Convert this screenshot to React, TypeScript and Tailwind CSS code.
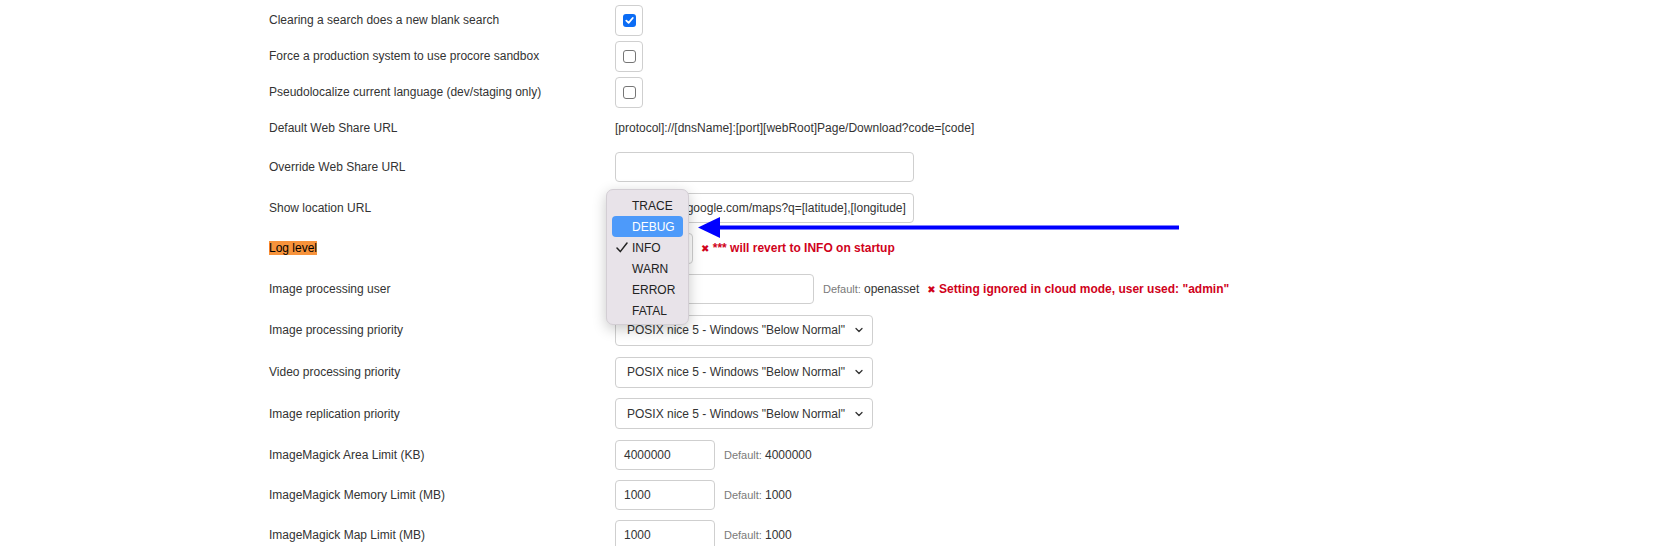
import React from 'react';
import { ChevronDown } from 'lucide-react';

const font = { fontFamily: '"Liberation Sans", Arial, sans-serif' };

const Box: React.FC<{ checked?: boolean }> = ({ checked }) => (
  <div className="w-[28px] h-[31px] border border-[#cfcfcf] rounded-[4px] flex items-center justify-center bg-white">
    {checked ? (
      <span className="w-[13px] h-[13px] rounded-[3px] bg-[#0b6cf5] flex items-center justify-center">
        <svg width="9" height="9" viewBox="0 0 10 10">
          <path d="M1.5 5.2 L4 7.6 L8.6 2.2" stroke="white" strokeWidth="2" fill="none" strokeLinecap="round" strokeLinejoin="round" />
        </svg>
      </span>
    ) : (
      <span className="w-[13px] h-[13px] rounded-[3px] border border-[#767676] bg-white" />
    )}
  </div>
);

const TextBox: React.FC<{ value?: string; w: string }> = ({ value, w }) => (
  <div className={`${w} h-[30px] border border-[#cfcfcf] rounded-[4px] bg-white px-[8px] flex items-center overflow-hidden whitespace-nowrap text-[12px] text-[#333]`}>
    {value}
  </div>
);

const Priority = () => (
  <div className="w-[258px] h-[31px] border border-[#cfcfcf] rounded-[4px] bg-white pl-[11px] pr-[7px] flex items-center justify-between text-[12px] text-[#333]">
    <span>POSIX nice 5 - Windows "Below Normal"</span>
    <ChevronDown size={12} strokeWidth={2.6} className="text-[#333]" />
  </div>
);

const Def: React.FC<{ v: string }> = ({ v }) => (
  <span className="ml-[9px] text-[12px] text-[#333]">
    <span className="text-[11px] text-[#7a7a7a]">Default: </span>
    {v}
  </span>
);

const Err: React.FC<{ children: React.ReactNode }> = ({ children }) => (
  <span className="ml-[8px] text-[12px] font-bold text-[#d0021b] whitespace-nowrap">
    <span className="text-[10px]" style={{ fontFamily: '"DejaVu Sans", sans-serif' }}>✖</span> {children}
  </span>
);

const Row: React.FC<{ h: string; label: React.ReactNode; children?: React.ReactNode }> = ({ h, label, children }) => (
  <div className={`${h} flex items-center`}>
    <div className="w-[346px] text-[12px] text-[#333] shrink-0">{label}</div>
    <div className="flex items-center">{children}</div>
  </div>
);

const levels = ['TRACE', 'DEBUG', 'INFO', 'WARN', 'ERROR', 'FATAL'];

export default function App() {
  return (
    <div className="relative w-[1675px] h-[546px] overflow-hidden bg-white" style={font}>
      <div className="pl-[269px] pt-[2px]">
        <Row h="h-[36px]" label="Clearing a search does a new blank search"><Box checked /></Row>
        <Row h="h-[36px]" label="Force a production system to use procore sandbox"><Box /></Row>
        <Row h="h-[36px]" label="Pseudolocalize current language (dev/staging only)"><Box /></Row>
        <Row h="h-[36px]" label="Default Web Share URL">
          <span className="text-[12px] text-[#333]">[protocol]://[dnsName]:[port][webRoot]Page/Download?code=[code]</span>
        </Row>
        <Row h="h-[41px]" label="Override Web Share URL"><TextBox w="w-[299px]" /></Row>
        <Row h="h-[41px]" label="Show location URL">
          <TextBox w="w-[299px]" value="http://maps.google.com/maps?q=[latitude],[longitude]" />
        </Row>
        <Row h="h-[40px]" label={<span className="bg-[#f7933b] text-black leading-[14px] inline-block">Log level</span>}>
          <div className="w-[78px] h-[31px] border border-[#cfcfcf] rounded-[4px] bg-white" />
          <Err>*** will revert to INFO on startup</Err>
        </Row>
        <Row h="h-[41px]" label="Image processing user">
          <TextBox w="w-[199px]" />
          <Def v="openasset" />
          <Err>Setting ignored in cloud mode, user used: "admin"</Err>
        </Row>
        <Row h="h-[42px]" label="Image processing priority"><Priority /></Row>
        <Row h="h-[42px]" label="Video processing priority"><Priority /></Row>
        <Row h="h-[41px]" label="Image replication priority"><Priority /></Row>
        <Row h="h-[41px]" label="ImageMagick Area Limit (KB)">
          <TextBox w="w-[100px]" value="4000000" />
          <Def v="4000000" />
        </Row>
        <Row h="h-[40px]" label="ImageMagick Memory Limit (MB)">
          <TextBox w="w-[100px]" value="1000" />
          <Def v="1000" />
        </Row>
        <Row h="h-[40px]" label="ImageMagick Map Limit (MB)">
          <TextBox w="w-[100px]" value="1000" />
          <Def v="1000" />
        </Row>
      </div>

      {/* native popup menu */}
      <div className="absolute left-[606px] top-[189px] w-[83px] h-[136px] rounded-[7px] bg-[#e8e3e9] border border-[#d3ced4] shadow-[0_4px_14px_rgba(0,0,0,0.22)] pt-[5px] px-[5px]">
        {levels.map((l) => (
          <div
            key={l}
            className={`h-[21px] rounded-[4px] flex items-center text-[12px] ${l === 'DEBUG' ? 'bg-[#4d9afa] text-white' : 'text-[#222]'}`}
          >
            <span className="w-[20px] flex justify-center">
              {l === 'INFO' && (
                <svg width="12" height="11" viewBox="0 0 12 11">
                  <path d="M1 6 L4.3 9.6 L11 1" stroke="#222" strokeWidth="1.5" fill="none" strokeLinecap="round" strokeLinejoin="round" />
                </svg>
              )}
            </span>
            {l}
          </div>
        ))}
      </div>

      {/* annotation arrow */}
      <svg className="absolute left-[698px] top-[216px]" width="484" height="24" viewBox="0 0 484 24">
        <line x1="18" y1="11.5" x2="481" y2="11.5" stroke="#0000ff" strokeWidth="4" />
        <polygon points="0,11.5 22,1 22,22" fill="#0000ff" />
      </svg>
    </div>
  );
}
